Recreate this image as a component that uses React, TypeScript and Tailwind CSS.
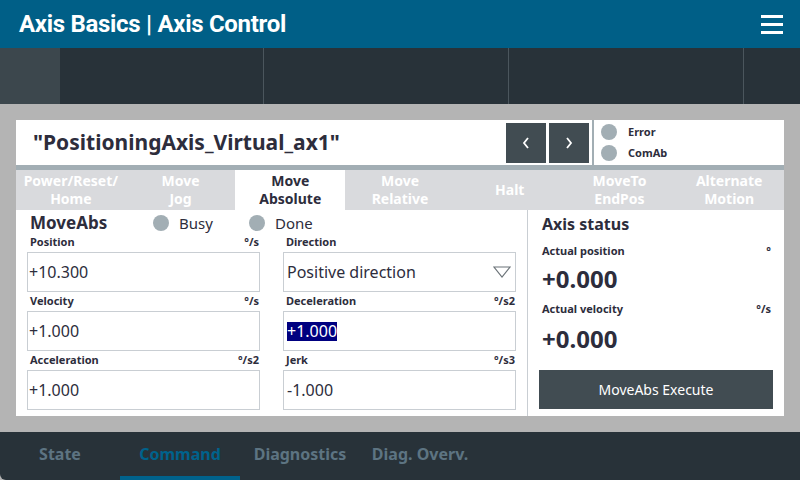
import React from "react";

const font = { fontFamily: '"Noto Sans", "Open Sans", Arial, sans-serif' };

function Field({ label, unit, value, selected, pad }: { label: string; unit?: string; value: string; selected?: boolean; pad: string }) {
  return (
    <div className="flex flex-col">
      <div className="h-[19px] flex items-center justify-between pl-[3px] pr-[1px] text-[11px] font-bold text-[#2d2d3c]">
        <span>{label}</span>
        <span>{unit}</span>
      </div>
      <div className={`h-[40px] border border-[#c9ced3] flex items-center text-[16px] text-[#2d2d3c] ${pad}`}>
        {selected ? <span className="bg-[#000080] text-white leading-[19px]">{value}</span> : <span>{value}</span>}
      </div>
    </div>
  );
}

export default function App() {
  const tabs = [
    ["Power/Reset/", "Home"],
    ["Move", "Jog"],
    ["Move", "Absolute"],
    ["Move", "Relative"],
    ["Halt"],
    ["MoveTo", "EndPos"],
    ["Alternate", "Motion"],
  ];

  return (
    <div className="w-[800px] h-[480px] bg-[#b4b4b4] flex flex-col overflow-hidden" style={font}>
      {/* Header */}
      <div className="h-[48px] bg-[#005f87] flex items-center justify-between pl-[19px] pr-[17px]">
        <div
          className="text-white text-[24px] font-bold tracking-[-0.3px]"
          style={{ fontFamily: '"Roboto", "Noto Sans", sans-serif' }}
        >
          Axis Basics | Axis Control
        </div>
        <div className="flex flex-col gap-[5px] w-[22px]">
          <div className="h-[3px] bg-white" />
          <div className="h-[3px] bg-white" />
          <div className="h-[3px] bg-white" />
        </div>
      </div>

      {/* Toolbar */}
      <div className="h-[56px] bg-[#283239] flex">
        <div className="w-[60px] bg-[#3c474d]" />
        <div className="w-[204px] border-r border-[#4b565d]" />
        <div className="w-[245px] border-r border-[#4b565d]" />
        <div className="w-[235px] border-r border-[#4b565d]" />
        <div className="flex-1" />
      </div>

      {/* Main */}
      <div className="flex-1 px-4 py-4">
        <div className="w-[768px] h-[296px] bg-white flex flex-col">
          {/* Title row */}
          <div className="h-[45px] flex">
            <div className="flex-1 flex items-center pl-[17px] text-[21px] font-bold text-[#2d2d3c]">
              "PositioningAxis_Virtual_ax1"
            </div>
            <div className="flex gap-[3px] pt-[3px] pr-[3px]">
              <button className="w-[40px] h-[40px] bg-[#414c52] flex items-center justify-center">
                <svg width="10" height="12" viewBox="0 0 10 12"><path d="M7 1 L3 6 L7 11" fill="none" stroke="white" strokeWidth="1.8" /></svg>
              </button>
              <button className="w-[40px] h-[40px] bg-[#414c52] flex items-center justify-center">
                <svg width="10" height="12" viewBox="0 0 10 12"><path d="M3 1 L7 6 L3 11" fill="none" stroke="white" strokeWidth="1.8" /></svg>
              </button>
            </div>
            <div className="w-[2px] bg-[#a2aeb4]" />
            <div className="w-[190px] flex flex-col justify-center gap-[4px] pl-[7px] text-[11px] font-bold text-[#2d2d3c]">
              <div className="flex items-center gap-[11px]">
                <div className="w-[16px] h-[16px] rounded-full bg-[#a2aeb4]" />
                <span>Error</span>
              </div>
              <div className="flex items-center gap-[11px]">
                <div className="w-[16px] h-[16px] rounded-full bg-[#a2aeb4]" />
                <span>ComAb</span>
              </div>
            </div>
          </div>
          <div className="h-[5px] bg-[#a2aeb4]" />

          {/* Tabs */}
          <div className="h-[40px] flex bg-[#d9dadd]">
            {tabs.map((t, i) => (
              <div
                key={i}
                className={`w-[110px] flex flex-col items-center justify-center text-[14px] font-bold leading-[18px] ${
                  i === 2 ? "bg-white text-[#2d2d3c]" : "text-white"
                }`}
              >
                {t.map((l) => (
                  <span key={l}>{l}</span>
                ))}
              </div>
            ))}
          </div>

          {/* Content */}
          <div className="flex-1 flex">
            <div className="w-[512px] pl-[11px] pr-[11px] border-r border-[#c9ced3]">
              <div className="h-[23px] pt-[3px] flex items-center">
                <span className="w-[126px] pl-[3px] text-[17px] font-bold text-[#2d2d3c]">MoveAbs</span>
                <div className="w-[16px] h-[16px] rounded-full bg-[#a2aeb4]" />
                <span className="ml-[10px] w-[70px] text-[15px] text-[#2d2d3c]">Busy</span>
                <div className="w-[16px] h-[16px] rounded-full bg-[#a2aeb4]" />
                <span className="ml-[10px] text-[15px] text-[#2d2d3c]">Done</span>
              </div>
              <div className="grid grid-cols-2 gap-x-[23px]">
                <Field label="Position" unit="°/s" value="+10.300" pad="pl-[1px]" />
                <div className="flex flex-col">
                  <div className="h-[19px] flex items-center pl-[3px] text-[11px] font-bold text-[#2d2d3c]">Direction</div>
                  <div className="h-[40px] border border-[#c9ced3] flex items-center justify-between pl-[3px] pr-[4px] text-[16px] text-[#2d2d3c]">
                    <span>Positive direction</span>
                    <svg width="18" height="12" viewBox="0 0 18 12">
                      <polygon points="1,1 17,1 9,11" fill="none" stroke="#6b7378" strokeWidth="1.2" />
                    </svg>
                  </div>
                </div>
                <Field label="Velocity" unit="°/s" value="+1.000" pad="pl-[1px]" />
                <Field label="Deceleration" unit="°/s2" value="+1.000" selected pad="pl-[3px]" />
                <Field label="Acceleration" unit="°/s2" value="+1.000" pad="pl-[1px]" />
                <Field label="Jerk" unit="°/s3" value="-1.000" pad="pl-[3px]" />
              </div>
            </div>

            <div className="flex-1 pl-[11px] pr-[11px] flex flex-col text-[#2d2d3c]">
              <div className="h-[28px] flex items-center pl-[3px] text-[16px] font-bold">Axis status</div>
              <div className="h-[26px] flex items-center justify-between pl-[3px] pr-[2px] text-[11px] font-bold">
                <span>Actual position</span>
                <span>°</span>
              </div>
              <div className="h-[30px] flex items-center pl-[3px] text-[24px] font-bold">+0.000</div>
              <div className="h-[31px] flex items-center justify-between pl-[3px] pr-[2px] text-[11px] font-bold">
                <span>Actual velocity</span>
                <span>°/s</span>
              </div>
              <div className="h-[28px] flex items-center pl-[3px] text-[24px] font-bold">+0.000</div>
              <div className="mt-[17px] h-[39px] bg-[#414c52] text-white text-[14px] flex items-center justify-center">
                MoveAbs Execute
              </div>
            </div>
          </div>
        </div>
      </div>

      {/* Bottom nav */}
      <div className="h-[48px] bg-[#283239] rounded-bl-[6px] flex">
        {["State", "Command", "Diagnostics", "Diag. Overv."].map((t, i) => (
          <div
            key={t}
            className={`w-[120px] flex items-center justify-center text-[16px] font-bold border-b-[4px] ${
              i === 1 ? "text-[#00628c] border-[#00628c]" : "text-[#5d7482] border-transparent"
            }`}
          >
            {t}
          </div>
        ))}
      </div>
    </div>
  );
}
